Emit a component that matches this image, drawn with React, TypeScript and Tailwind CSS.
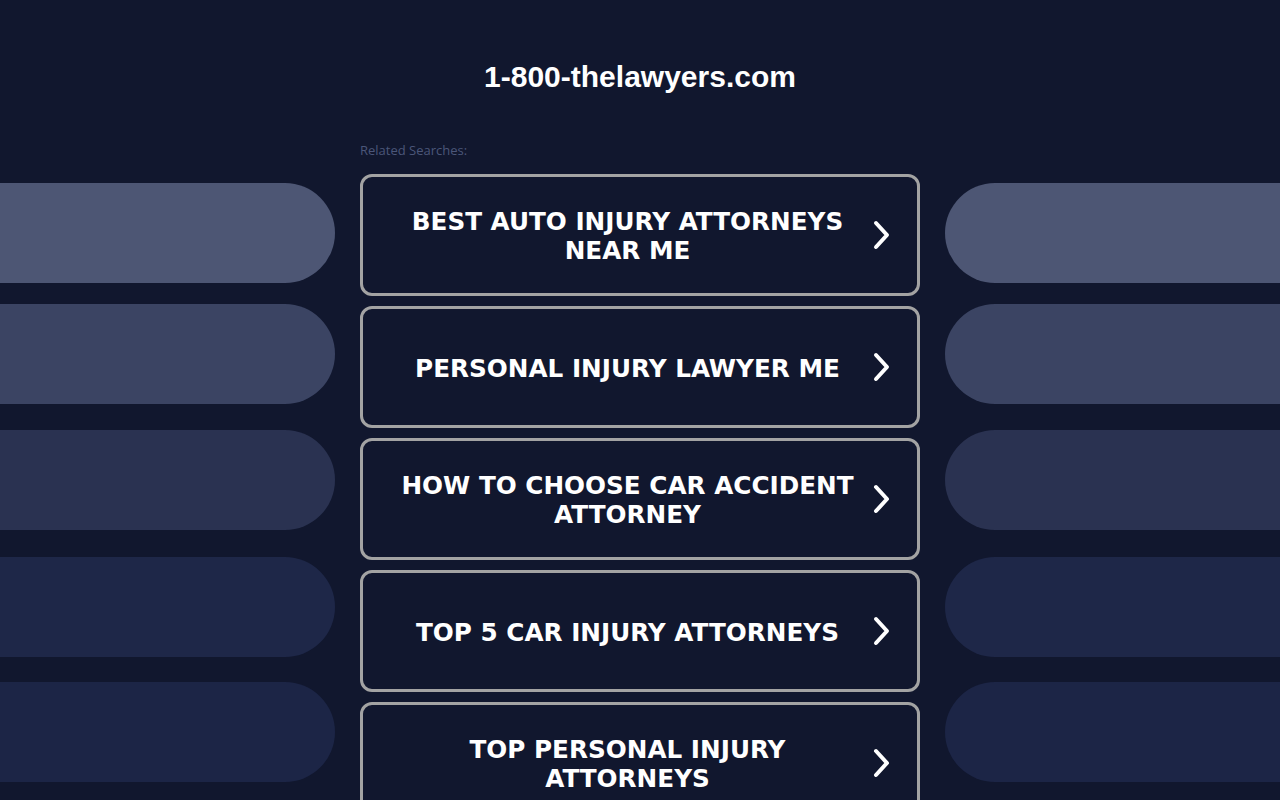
import React from "react";

const items = [
  "BEST AUTO INJURY ATTORNEYS NEAR ME",
  "PERSONAL INJURY LAWYER ME",
  "HOW TO CHOOSE CAR ACCIDENT ATTORNEY",
  "TOP 5 CAR INJURY ATTORNEYS",
  "TOP PERSONAL INJURY ATTORNEYS",
];

const pills = [
  { c: "bg-[#4d5674]", m: "mt-0" },
  { c: "bg-[#3b4463]", m: "mt-[21px]" },
  { c: "bg-[#2a3251]", m: "mt-[26px]" },
  { c: "bg-[#1e2748]", m: "mt-[27px]" },
  { c: "bg-[#1c2546]", m: "mt-[25px]" },
];

function Chevron() {
  return (
    <svg width="20" height="30" viewBox="0 0 20 30" fill="none">
      <path d="M4 3 L15 15 L4 27" stroke="white" strokeWidth="4" strokeLinecap="round" strokeLinejoin="round" />
    </svg>
  );
}

export default function App() {
  return (
    <div className="w-[1280px] h-[800px] overflow-hidden bg-[#11172e] relative">
      <div className="flex justify-center pt-[58px]">
        <h1 className="text-white font-bold text-[30px] leading-[38px]" style={{ fontFamily: '"Liberation Sans", Arial, sans-serif' }}>
          1-800-thelawyers.com
        </h1>
      </div>
      <div className="flex justify-between mt-[47px]">
        <div className="w-[335px] flex flex-col pt-[40px]">
          {pills.map((p, i) => (
            <div key={i} className={`h-[100px] w-[335px] rounded-r-[50px] ${p.c} ${p.m}`} />
          ))}
        </div>
        <div className="w-[560px] flex flex-col">
          <div className="text-[13px] leading-[15px] mt-[0px] text-[#4b5679] mb-[16px]" style={{ fontFamily: '"Open Sans", "Liberation Sans", sans-serif' }}>
            Related Searches:
          </div>
          <div className="flex flex-col gap-[10px]">
            {items.map((t) => (
              <div key={t} className="h-[122px] w-[560px] border-[3px] border-[#a3a3a3] rounded-[12px] flex items-center">
                <div
                  className="flex-1 pl-[35px] pt-[2px] text-center text-white font-bold text-[24.7px] leading-[29px]"
                  style={{ fontFamily: '"DejaVu Sans", Verdana, sans-serif' }}
                >
                  {t}
                </div>
                <div className="w-[60px] flex justify-center pr-[10px]">
                  <Chevron />
                </div>
              </div>
            ))}
          </div>
        </div>
        <div className="w-[335px] flex flex-col pt-[40px]">
          {pills.map((p, i) => (
            <div key={i} className={`h-[100px] w-[335px] rounded-l-[50px] ${p.c} ${p.m}`} />
          ))}
        </div>
      </div>
    </div>
  );
}
